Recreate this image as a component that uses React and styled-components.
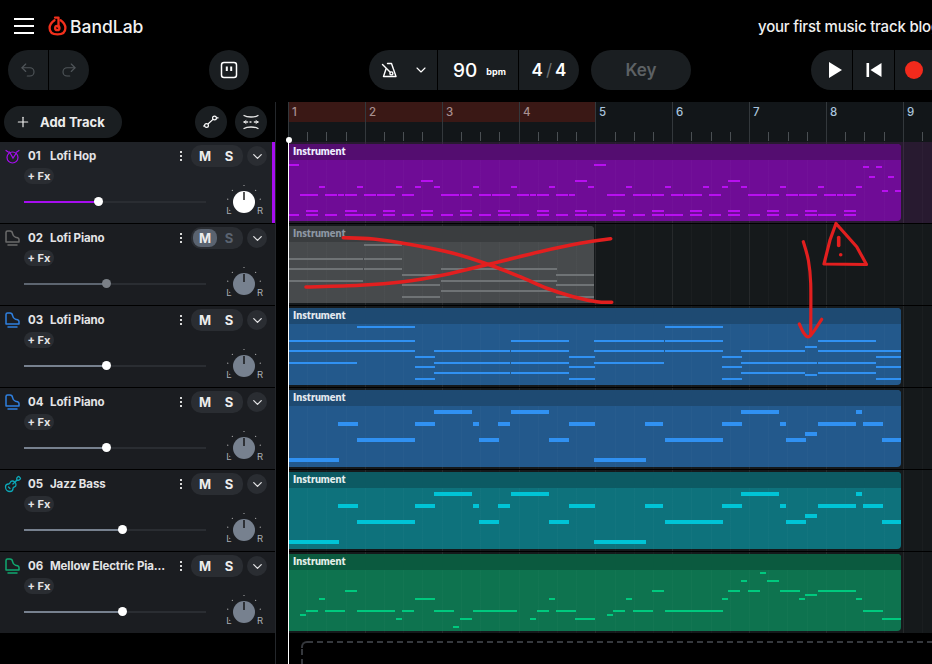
import React from "react";
import styled, { createGlobalStyle } from "styled-components";
import { Undo2, Redo2, Plus, ChevronDown, Guitar } from "lucide-react";

const Global = createGlobalStyle`
  html, body { margin: 0; padding: 0; background: #000; overflow: hidden; }
  body { width: 932px; height: 664px; font-family: "Inter", "Liberation Sans", sans-serif; color: #fff; }
`;

const Page = styled.div`
  width: 932px;
  height: 664px;
  overflow: hidden;
  display: flex;
  flex-direction: column;
  background: #000;
`;

const Header = styled.header`
  height: 50px;
  flex: none;
  display: flex;
  align-items: center;
  padding: 2px 0 0 14px;
  box-sizing: border-box;
  white-space: nowrap;
  overflow: hidden;
`;
const Burger = styled.div`
  width: 20px;
  height: 16px;
  flex: none;
  display: flex;
  flex-direction: column;
  justify-content: space-between;
  margin-right: 14px;
  span { display: block; height: 2px; background: #fff; }
`;
const Brand = styled.div`
  font-size: 17.5px;
  font-weight: 500;
  margin-left: 3px;
  width: 688px;
  flex: none;
  color: #f2f2f2;
`;
const Title = styled.div`
  font-size: 15px;
  font-weight: 500;
  letter-spacing: -0.2px;
  color: #f0f0f0;
  flex: none;
`;

const Toolbar = styled.div`
  height: 40px;
  flex: none;
  display: flex;
  align-items: stretch;
  padding-left: 8px;
  margin-bottom: 12px;
`;
const Group = styled.div`
  display: flex;
  align-items: stretch;
  background: #1a1e21;
  border-radius: 20px;
  overflow: hidden;
  flex: none;
  margin-left: ${(p) => p.$ml || 0}px;
`;
const Cell = styled.div`
  width: ${(p) => p.$w}px;
  display: flex;
  align-items: center;
  justify-content: ${(p) => (p.$start ? "flex-start" : "center")};
  gap: ${(p) => p.$gap || 0}px;
  padding-left: ${(p) => p.$pl || 0}px;
  border-left: ${(p) => (p.$first ? "none" : "1px solid #000")};
  box-sizing: border-box;
  color: ${(p) => p.$color || "#fff"};
  flex: none;
`;
const Bpm = styled.span`
  font-size: 19px;
  font-weight: 500;
`;
const BpmUnit = styled.span`
  font-size: 9px;
  font-weight: 700;
  margin-top: 3px;
`;
const Sig = styled.span`
  font-size: 17px;
  font-weight: 600;
  display: flex;
  gap: 3px;
  i { font-style: normal; color: #6a6e72; font-weight: 400; }
`;
const KeyText = styled.span`
  font-size: 17px;
  font-weight: 600;
  color: #5d6164;
`;
const RecDot = styled.span`
  width: 18px;
  height: 18px;
  border-radius: 50%;
  background: #f22a1c;
`;

const Main = styled.div`
  flex: 1;
  display: flex;
  min-height: 0;
`;
const Sidebar = styled.aside`
  width: 276px;
  flex: none;
  box-sizing: border-box;
  border-right: 1px solid #24272b;
  display: flex;
  flex-direction: column;
`;
const SideTop = styled.div`
  height: 40px;
  flex: none;
  display: flex;
  align-items: flex-start;
  padding: 4px 0 0 4px;
  box-sizing: border-box;
`;
const AddTrack = styled.div`
  width: 118px;
  height: 32px;
  border-radius: 16px;
  background: #1a1e21;
  display: flex;
  align-items: center;
  gap: 9px;
  padding-left: 11px;
  box-sizing: border-box;
  font-size: 13px;
  font-weight: 700;
  color: #ececec;
  margin-right: 73px;
`;
const RoundBtn = styled.div`
  width: 32px;
  height: 32px;
  border-radius: 50%;
  background: #1a1e21;
  display: flex;
  align-items: center;
  justify-content: center;
  margin-right: 8px;
  flex: none;
`;

const TrackRow = styled.div`
  height: 81px;
  margin-bottom: 1px;
  background: ${(p) => (p.$active ? "#1f2227" : "#1b1d21")};
  border-right: ${(p) => (p.$active ? "3px solid #a60df0" : "none")};
  box-sizing: border-box;
  padding: 3px 0 0 5px;
  width: 275px;
  flex: none;
  display: flex;
  flex-direction: column;
`;
const TrackTop = styled.div`
  display: flex;
  align-items: center;
  height: 22px;
`;
const IconSlot = styled.div`
  width: 15px;
  height: 16px;
  display: flex;
  align-items: center;
  justify-content: center;
  margin-right: 8px;
  flex: none;
`;
const Num = styled.span`
  font-size: 11.5px;
  font-weight: 700;
  color: #e4e4e6;
  width: 22px;
  flex: none;
`;
const Name = styled.span`
  font-size: 11.5px;
  font-weight: 700;
  color: #e4e4e6;
  width: 120px;
  flex: none;
  overflow: hidden;
  white-space: nowrap;
  letter-spacing: -0.1px;
`;
const Kebab = styled.div`
  width: 2px;
  display: flex;
  flex-direction: column;
  gap: 2px;
  margin: 0 9px 0 10px;
  flex: none;
  span { width: 2px; height: 2px; background: #d8d8d8; }
`;
const MS = styled.div`
  width: 52px;
  height: 22px;
  border-radius: 10px;
  background: #2a2d32;
  display: flex;
  align-items: center;
  flex: none;
  padding: 2px;
  box-sizing: border-box;
`;
const MSBtn = styled.span`
  width: 24px;
  height: 18px;
  border-radius: 8px;
  display: flex;
  align-items: center;
  justify-content: center;
  font-size: 13px;
  font-weight: 700;
  background: ${(p) => (p.$on ? "#5a6370" : "transparent")};
  color: ${(p) => (p.$dim ? "#5a6370" : "#ececec")};
`;
const Chevron = styled.div`
  width: 20px;
  height: 20px;
  border-radius: 50%;
  background: #2a2d32;
  display: flex;
  align-items: center;
  justify-content: center;
  margin-left: 4px;
  flex: none;
`;
const FxRow = styled.div`
  padding-left: 19px;
  margin-top: 1px;
  display: flex;
`;
const Fx = styled.span`
  width: 30px;
  height: 16px;
  border-radius: 8px;
  background: #2a2d32;
  font-size: 11px;
  font-weight: 700;
  color: #e4e4e6;
  display: flex;
  align-items: center;
  justify-content: center;
`;
const MixRow = styled.div`
  display: flex;
  align-items: center;
  padding-left: 19px;
  margin-top: 3px;
  height: 30px;
`;
const Slider = styled.div`
  width: 182px;
  height: 2px;
  background: #2a2d32;
  position: relative;
  flex: none;
`;
const SliderFill = styled.div`
  height: 100%;
  background: ${(p) => p.$color};
`;
const Thumb = styled.span`
  position: absolute;
  top: -4px;
  width: 9px;
  height: 9px;
  margin-left: -4px;
  border-radius: 50%;
  background: ${(p) => p.$color};
`;
const KnobWrap = styled.div`
  width: 44px;
  height: 36px;
  margin-left: 16px;
  flex: none;
`;

const Timeline = styled.section`
  position: relative;
  flex: 1;
  margin-left: 12px;
  min-width: 0;
  display: flex;
  flex-direction: column;
`;
const Ruler = styled.div`
  height: 40px;
  flex: none;
  background: #121619;
  position: relative;
  overflow: hidden;
`;
const LoopBand = styled.div`
  position: absolute;
  left: 0;
  top: 0;
  width: 307px;
  height: 20px;
  background: #3a1815;
`;
const BarLabel = styled.span`
  position: absolute;
  top: 3px;
  font-size: 11.5px;
  font-weight: 500;
  color: ${(p) => (p.$loop ? "#a89090" : "#a9c4dd")};
`;
const Lanes = styled.div`
  display: flex;
  flex-direction: column;
`;
const Lane = styled.div`
  height: 81px;
  margin-bottom: 1px;
  position: relative;
  background-color: ${(p) => p.$bg || "#15191b"};
  background-image:
    repeating-linear-gradient(90deg, rgba(255,255,255,.05) 0 1px, transparent 1px 76.85px),
    repeating-linear-gradient(90deg, rgba(255,255,255,.025) 0 1px, transparent 1px 19.21px);
  flex: none;
  overflow: hidden;
`;
const Clip = styled.div`
  position: absolute;
  top: 2px;
  left: 0;
  height: 77px;
  width: ${(p) => p.$w}px;
  background: ${(p) => p.$body};
  border-radius: 0 4px 4px 0;
  overflow: hidden;
  background-image: repeating-linear-gradient(90deg, rgba(255,255,255,.02) 0 1px, transparent 1px 19.21px);
`;
const ClipHead = styled.div`
  height: 16px;
  background: ${(p) => p.$head};
  font-family: "Lato", "Liberation Sans", sans-serif;
  font-size: 10.5px;
  font-weight: 800;
  color: ${(p) => p.$label};
  padding: 1px 0 0 5px;
  box-sizing: border-box;
  line-height: 13px;
`;
const NotesSvg = styled.svg`
  position: absolute;
  left: 0;
  top: 0;
  shape-rendering: crispEdges;
`;
const AddLane = styled.div`
  margin: 7px 0 0 13px;
  height: 60px;
  width: 800px;
  flex: none;
  position: relative;
  background:
    repeating-linear-gradient(90deg, #35383d 0 6px, transparent 6px 10px) 6px 0 / 100% 2px no-repeat,
    repeating-linear-gradient(180deg, #35383d 0 6px, transparent 6px 10px) 0 8px / 2px 100% no-repeat;
  &::before {
    content: "";
    position: absolute;
    left: 0;
    top: 0;
    width: 4px;
    height: 5px;
    border-left: 2px solid #35383d;
    border-top: 2px solid #35383d;
    border-top-left-radius: 6px;
  }
`;
const PlayLine = styled.div`
  position: absolute;
  left: 0;
  top: 37px;
  bottom: 0;
  width: 1px;
  background: #fff;
  &::before {
    content: "";
    position: absolute;
    left: -2px;
    top: -2px;
    width: 6px;
    height: 6px;
    border-radius: 50%;
    background: #fff;
  }
`;
const Overlay = styled.svg`
  position: absolute;
  left: 0;
  top: 0;
  pointer-events: none;
`;

const X0 = 289;
const z = (origin, list) => list.map(([a, b]) => [origin + a / 3, origin + b / 3]);
const row = (y, ...parts) => ({ y, spans: parts.flat() });

const purple = [
  row(164, z(280, [[27,60],[945,981]])),
  row(166, z(600, [[792,810],[831,849]])),
  row(176, z(600, [[810,828],[867,885]])),
  row(180, z(280, [[426,462],[888,924]]), z(600, [[387,423]])),
  row(186, z(280, [[120,138],[234,252],[351,369],[408,426],[465,483],[582,600],[696,714],[810,828],[927,945]]), z(600, [[81,99],[198,216],[312,330],[369,387],[426,444],[543,561],[657,675],[771,789]])),
  row(190, z(600, [[849,867],[888,906]])),
  row(194, z(280, [[63,117],[138,174],[177,195],[198,234],[255,291],[294,348],[369,405],[486,540],[543,579],[600,636],[639,693],[714,750],[753,771],[774,810],[831,867],[870,888],[984,1020]]), z(600, [[24,78],[102,156],[159,195],[216,252],[255,309],[330,366],[447,501],[504,540],[561,597],[600,654],[675,711],[714,732],[735,771]])),
  row(210, z(280, [[81,117],[198,234],[312,348],[426,462],[543,579],[657,693],[774,810],[888,924],[1002,1020]]), z(600, [[42,78],[159,195],[273,309],[387,423],[504,540],[618,654],[735,771]])),
  row(214, z(280, [[27,60],[81,117],[138,174],[198,252],[255,291],[312,348],[369,405],[426,462],[486,522],[543,579],[600,636],[657,693],[696,750],[774,810],[831,867],[888,924],[927,981],[1002,1020]]), z(600, [[42,78],[102,138],[159,195],[198,252],[273,309],[330,366],[387,423],[447,483],[504,540],[561,597],[618,654],[657,711],[735,771]])),
];
const gray = [
  row(244, z(280, [[255,369]])),
  row(258, z(280, [[27,252],[255,369]])),
  row(268, z(280, [[27,252],[255,369],[486,834]])),
  row(274, z(280, [[369,483],[831,945]])),
  row(280, z(280, [[27,252],[486,834]])),
  row(284, z(280, [[369,483],[831,945]])),
  row(290, z(280, [[486,834]])),
  row(296, z(280, [[369,483],[831,945]])),
];
const blueThin = [
  row(326, z(285, [[219,393]]), z(600, [[198,372]])),
  row(340, z(285, [[12,393],[681,855],[930,990]]), z(600, [[0,195],[198,372],[657,831]])),
  row(346, z(600, [[618,654]])),
  row(350, z(285, [[12,393],[450,678],[681,855],[930,990]]), z(600, [[0,195],[198,372],[426,618],[657,905]])),
  row(356, z(285, [[393,453],[855,933]]), z(600, [[369,429],[831,905]])),
  row(362, z(285, [[12,219],[450,678],[681,855],[930,990]]), z(600, [[0,195],[426,654],[657,831]])),
  row(366, z(285, [[393,453],[855,933]]), z(600, [[369,429],[831,905]])),
  row(372, z(285, [[450,678],[681,855]]), z(600, [[426,618],[657,831]])),
  row(374, z(600, [[618,654]])),
  row(378, z(285, [[393,453],[855,933]]), z(600, [[369,429],[831,905]])),
];
const thick = (off) => [
  row(410 + off, z(285, [[450,564],[681,795]]), z(600, [[426,540],[771,789]])),
  row(422 + off, z(285, [[162,222],[393,453],[567,585],[642,678],[855,933]]), z(600, [[138,192],[369,429],[543,561],[657,771],[792,852]])),
  row(432 + off, z(600, [[618,654]])),
  row(438 + off, z(285, [[219,393],[585,645],[795,855]]), z(600, [[198,372],[561,621],[849,905]])),
  row(458 + off, z(285, [[12,165],[930,990]]), z(600, [[0,141]])),
];
const green = [
  row(572, z(600, [[483,501]])),
  row(580, z(600, [[426,444],[504,540]])),
  row(590, z(285, [[183,219]]), z(600, [[159,195],[387,423],[447,483],[543,603],[657,771]])),
  row(594, z(600, [[618,654]])),
  row(598, z(285, [[105,123],[393,453],[795,813]]), z(600, [[81,99],[369,387],[600,618],[771,789]])),
  row(610, z(285, [[66,102],[123,183],[219,333],[354,390],[450,510],[567,699],[759,795],[816,876],[987,990]]), z(600, [[42,78],[102,162],[198,372],[792,852]])),
  row(614, z(285, [[48,66],[969,987]]), z(600, [[24,42]])),
  row(618, z(285, [[336,354],[528,564],[738,756],[873,933]]), z(600, [[849,905]])),
  row(626, z(285, [[507,525]])),
];

const Notes = ({ rows, top, color, h, w }) => (
  <NotesSvg width={w} height={77}>
    {rows.map((r) =>
      r.spans.map(([a, b], i) => (
        <rect key={r.y + "-" + i} x={Math.round(a - X0)} y={r.y - top} width={Math.round(b - a)} height={h} fill={color} />
      ))
    )}
  </NotesSvg>
);

const tracks = [
  { n: "01", name: "Lofi Hop", icon: "hop", iconColor: "#a60df0", fill: "#a60df0", pos: 74, thumb: "#fff", knob: "#fff", active: true,
    clip: { w: 613, body: "#6f0c96", head: "#540d70", note: "#b80ff0", rows: purple, h: 2, label: "#eef", top: 144 }, laneBg: "#281a30" },
  { n: "02", name: "Lofi Piano", icon: "piano", iconColor: "#6b6b6b", fill: "#5d6570", pos: 82, thumb: "#7b8087", knob: "#77818f", muted: true,
    clip: { w: 306, body: "#474a4c", head: "#3a3d3f", note: "#6f7375", rows: gray, h: 2, label: "#8d97a3", top: 226 } },
  { n: "03", name: "Lofi Piano", icon: "piano", iconColor: "#2f80e0", fill: "#77818f", pos: 82, thumb: "#fff", knob: "#77818f",
    clip: { w: 613, body: "#23598c", head: "#1e4a72", note: "#3091f2", rows: blueThin, h: 2, label: "#e4e8ee", top: 308 } },
  { n: "04", name: "Lofi Piano", icon: "piano", iconColor: "#2f80e0", fill: "#77818f", pos: 82, thumb: "#fff", knob: "#77818f",
    clip: { w: 613, body: "#23598c", head: "#1e4a72", note: "#3091f2", rows: thick(0), h: 4, label: "#e4e8ee", top: 390 } },
  { n: "05", name: "Jazz Bass", icon: "guitar", iconColor: "#0ca8b8", fill: "#77818f", pos: 98, thumb: "#fff", knob: "#77818f",
    clip: { w: 613, body: "#0e727c", head: "#0c5a63", note: "#00c4d6", rows: thick(82), h: 4, label: "#e4eeee", top: 472 } },
  { n: "06", name: "Mellow Electric Pia...", icon: "piano", iconColor: "#10a870", fill: "#77818f", pos: 98, thumb: "#fff", knob: "#77818f",
    clip: { w: 613, body: "#0e734f", head: "#0b5a3f", note: "#00c97e", rows: green, h: 2, label: "#e4eee8", top: 554 } },
];

const HopIcon = ({ c }) => (
  <svg width="15" height="15" viewBox="0 0 15 15" fill="none" stroke={c} strokeWidth="1.2" strokeLinecap="round">
    <circle cx="7.5" cy="8.5" r="5.5" />
    <path d="M1 1.5 L3.6 3.2 M14 1.5 L11.4 3.2 M4.5 3 L8 9 L11 4.5" />
  </svg>
);
const PianoIcon = ({ c }) => (
  <svg width="15" height="16" viewBox="0 0 15 16" fill="none" stroke={c} strokeWidth="1.5" strokeLinejoin="round" strokeLinecap="round">
    <path d="M1 12 V2.5 Q1 1 2.5 1 H5 Q7.2 1 7.6 3.6 Q8 6.4 10.5 7.2 L12.6 7.8 Q14 8.3 14 9.6 V12 Z" />
    <path d="M3 15 H12" />
  </svg>
);
const TrackIcon = ({ t }) =>
  t.icon === "hop" ? <HopIcon c={t.iconColor} /> : t.icon === "guitar" ? <Guitar size={18} color={t.iconColor} strokeWidth={1.7} style={{ flex: "none" }} /> : <PianoIcon c={t.iconColor} />;

const Knob = ({ color }) => {
  const ticks = [-120, -80, -45, 0, 45, 80, 120];
  return (
    <svg width="44" height="36" viewBox="0 0 44 36">
      {ticks.map((a) => {
        const r = (a * Math.PI) / 180;
        return <circle key={a} cx={22 + 16.5 * Math.sin(r)} cy={18 - 16.5 * Math.cos(r)} r="0.6" fill="#bbb" />;
      })}
      <circle cx="22" cy="18" r="11" fill={color} />
      <rect x="21.3" y="8" width="1.4" height="8" fill="#111" />
      <text x="7" y="29.5" fontSize="9.5" fill="#a8adb3" textAnchor="middle" fontFamily="Inter">L</text>
      <text x="38" y="29.5" fontSize="9.5" fill="#a8adb3" textAnchor="middle" fontFamily="Inter">R</text>
    </svg>
  );
};

const Track = ({ t }) => (
  <TrackRow $active={t.active}>
    <TrackTop>
      <IconSlot><TrackIcon t={t} /></IconSlot>
      <Num>{t.n}</Num>
      <Name>{t.name}</Name>
      <Kebab><span /><span /><span /></Kebab>
      <MS>
        <MSBtn $on={t.muted}>M</MSBtn>
        <MSBtn $dim={t.muted}>S</MSBtn>
      </MS>
      <Chevron><ChevronDown size={15} color="#e4e4e6" strokeWidth={2} /></Chevron>
    </TrackTop>
    <FxRow><Fx>+ Fx</Fx></FxRow>
    <MixRow>
      <Slider>
        <SliderFill $color={t.fill} style={{ width: t.pos }} />
        <Thumb $color={t.thumb} style={{ left: t.pos }} />
      </Slider>
      <KnobWrap><Knob color={t.knob} /></KnobWrap>
    </MixRow>
  </TrackRow>
);

const bars = [1, 2, 3, 4, 5, 6, 7, 8, 9];
const RulerTicks = () => {
  const items = [];
  for (let b = 0; b < 9; b++) {
    const x = Math.round(b * 76.85);
    items.push(<rect key={"b" + b} x={x} y={0} width={1} height={40} fill="#33383c" />);
    for (let s = 1; s < 4; s++) {
      items.push(<rect key={b + "-" + s} x={Math.round((b + s / 4) * 76.85)} y={30} width={1} height={9} fill="#4a4f53" />);
    }
  }
  return <NotesSvg width={643} height={40}>{items}</NotesSvg>;
};

const Logo = () => (
  <svg width="19" height="20" viewBox="0 0 19 20" fill="none" stroke="#f2301c" strokeWidth="2.3" strokeLinecap="round" strokeLinejoin="round" style={{ flex: "none" }}>
    <path d="M6.5 4.2 C3.8 6 1.6 8.5 1.6 12 C1.6 16 4.6 18.4 9.5 18.4 C14.4 18.4 17.4 16 17.4 12 C17.4 8.5 15.2 6 12.6 4.2" />
    <path d="M7 1.6 H10.5 V11.4" />
    <circle cx="9.3" cy="12" r="2.2" />
  </svg>
);
const Metronome = () => (
  <svg width="18" height="18" viewBox="0 0 18 18" fill="none" stroke="#fff" strokeWidth="1.4" strokeLinejoin="round" strokeLinecap="round">
    <path d="M6.5 2.5 H10.5 L15 15.5 H2.5 L5 8" />
    <path d="M1.5 3.5 L11 13" />
    <circle cx="10.4" cy="12.4" r="1.5" fill="#1a1e21" />
  </svg>
);
const PauseBox = () => (
  <svg width="18" height="18" viewBox="0 0 18 18" fill="none" stroke="#fff" strokeWidth="1.5">
    <rect x="1.5" y="1.5" width="15" height="15" rx="2.5" />
    <path d="M6.8 5.5 V10 M11.2 5.5 V10" strokeWidth="2" />
  </svg>
);
const Automation = () => (
  <svg width="16" height="14" viewBox="0 0 16 14" fill="none" stroke="#fff" strokeWidth="1.2">
    <circle cx="3.5" cy="10.5" r="1.9" />
    <circle cx="11.5" cy="3" r="1.9" />
    <path d="M5 9 L10 4.4 M0 11 H1.6 M13.4 2.8 H15.5" />
  </svg>
);
const FitTracks = () => (
  <svg width="16" height="16" viewBox="0 0 16 16" fill="none" stroke="#e8e8e8" strokeWidth="1.3" strokeLinecap="round">
    <path d="M1 1.5 C4 3.5 12 3.5 15 1.5 M1 14.5 C4 12.5 12 12.5 15 14.5" />
    <path d="M1 8 H4.5 M11.5 8 H15" strokeWidth="1.6" />
    <path d="M7 8 H9" strokeDasharray="1 1" />
    <path d="M3 6.6 L1 8 L3 9.4 M13 6.6 L15 8 L13 9.4" strokeWidth="1" />
  </svg>
);

const ox = 288;
const oy = 102;
const p = (pts) => pts.map(([x, y], i) => (i ? "L" : "M") + (x - ox).toFixed(1) + " " + (y - oy).toFixed(1)).join(" ");
const smooth = (pts) => {
  const q = pts.map(([x, y]) => [x - ox, y - oy]);
  let d = `M${q[0][0]} ${q[0][1]}`;
  for (let i = 0; i < q.length - 1; i++) {
    const a = q[Math.max(i - 1, 0)], b = q[i], c = q[i + 1], e = q[Math.min(i + 2, q.length - 1)];
    d += ` C${b[0] + (c[0] - a[0]) / 6} ${b[1] + (c[1] - a[1]) / 6} ${c[0] - (e[0] - b[0]) / 6} ${c[1] - (e[1] - b[1]) / 6} ${c[0]} ${c[1]}`;
  }
  return d;
};

const Annotations = () => (
  <Overlay width="644" height="562" fill="none" stroke="#e21f1f" strokeWidth="3.6" strokeLinecap="round" strokeLinejoin="round">
    <path d={smooth([[343.3,237.7],[373.3,239],[413.3,245],[453.3,253.3],[490,265],[520,276.7],[546.7,288.3],[573.3,296.7],[596.7,301.7],[611.7,302.3]])} />
    <path d={smooth([[306,287],[360,285.3],[403.3,281.7],[443.3,275],[490,264],[540,251.7],[580,243.3],[610.7,238.7]])} />
    <path d={p([[836,223.5],[830,240],[824,264],[866.5,264.5],[856.7,246.7],[836,223.5]])} strokeWidth="3.2" />
    <path d={p([[838.7,237.5],[838.7,245.5]])} />
    <circle cx={840.7 - ox} cy={254.7 - oy} r="1.8" fill="#e21f1f" stroke="none" />
    <path d={smooth([[803.3,241.7],[808.3,260],[810.7,283.3],[810.7,335]])} strokeWidth="3.2" />
    <path d={smooth([[799.3,324],[804,333.3],[810,336],[821.7,319.3]])} strokeWidth="3.2" />
  </Overlay>
);

export default function App() {
  return (
    <Page>
      <Global />
      <Header>
        <Burger><span /><span /><span /></Burger>
        <Logo />
        <Brand>BandLab</Brand>
        <Title>your first music track blog</Title>
      </Header>
      <Toolbar>
        <Group>
          <Cell $w={40} $first $color="#50565a"><Undo2 size={18} strokeWidth={1.5} /></Cell>
          <Cell $w={41} $color="#50565a"><Redo2 size={18} strokeWidth={1.5} /></Cell>
        </Group>
        <Group $ml={120}>
          <Cell $w={40} $first><PauseBox /></Cell>
        </Group>
        <Group $ml={120}>
          <Cell $w={68} $first $gap={14} $pl={4}><Metronome /><ChevronDown size={16} strokeWidth={1.7} /></Cell>
          <Cell $w={81} $gap={9} $pl={3}><Bpm>90</Bpm><BpmUnit>bpm</BpmUnit></Cell>
          <Cell $w={61}><Sig>4<i>/</i>4</Sig></Cell>
        </Group>
        <Group $ml={12}>
          <Cell $w={100} $first><KeyText>Key</KeyText></Cell>
        </Group>
        <Group $ml={120}>
          <Cell $w={41} $first $pl={6}>
            <svg width="16" height="18" viewBox="0 0 16 18"><path d="M2 1 L15 9 L2 17 Z" fill="#fff" /></svg>
          </Cell>
          <Cell $w={42}>
            <svg width="16" height="16" viewBox="0 0 16 16"><rect x="0.5" y="1" width="2.6" height="14" fill="#fff" /><path d="M15.5 1 V15 L4.5 8 Z" fill="#fff" /></svg>
          </Cell>
          <Cell $w={60} $start $pl={10}><RecDot /></Cell>
        </Group>
      </Toolbar>
      <Main>
        <Sidebar>
          <SideTop>
            <AddTrack><Plus size={16} strokeWidth={1.8} />Add Track</AddTrack>
            <RoundBtn><Automation /></RoundBtn>
            <RoundBtn><FitTracks /></RoundBtn>
          </SideTop>
          {tracks.map((t) => <Track key={t.n} t={t} />)}
        </Sidebar>
        <Timeline>
          <Ruler>
            <LoopBand />
            <RulerTicks />
            {bars.map((b, i) => (
              <BarLabel key={b} $loop={i < 4} style={{ left: Math.round(i * 76.85) + 4 }}>{b}</BarLabel>
            ))}
          </Ruler>
          <Lanes>
            {tracks.map((t) => (
              <Lane key={t.n} $bg={t.laneBg}>
                <Clip $w={t.clip.w} $body={t.clip.body}>
                  <ClipHead $head={t.clip.head} $label={t.clip.label}>Instrument</ClipHead>
                  <Notes rows={t.clip.rows} top={t.clip.top} color={t.clip.note} h={t.clip.h} w={t.clip.w} />
                </Clip>
              </Lane>
            ))}
          </Lanes>
          <AddLane />
          <PlayLine />
          <Annotations />
        </Timeline>
      </Main>
    </Page>
  );
}
